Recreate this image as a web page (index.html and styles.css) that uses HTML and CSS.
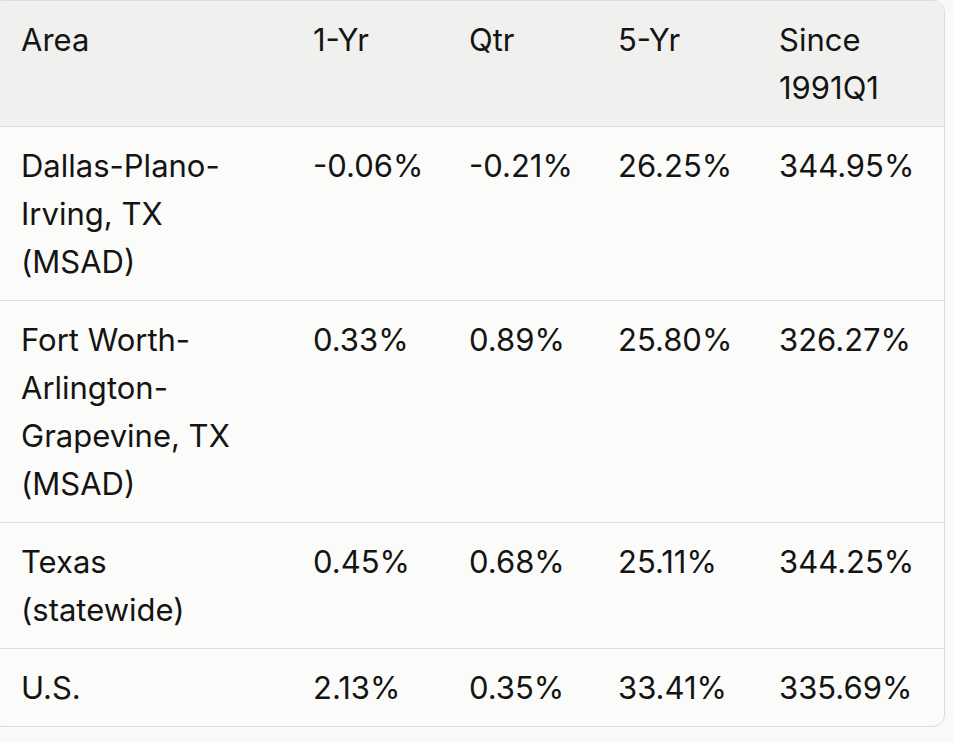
FILE: index.html
```html
<!DOCTYPE html>
<html lang="en">
<head>
<meta charset="utf-8">
<title>Area HPI</title>
<link rel="stylesheet" href="styles.css">
</head>
<body>
<div class="wrap">
  <table class="hpi">
    <colgroup>
      <col class="c-area">
      <col class="c-yr">
      <col class="c-qtr">
      <col class="c-5yr">
      <col class="c-since">
    </colgroup>
    <thead>
      <tr>
        <th>Area</th>
        <th>1-Yr</th>
        <th>Qtr</th>
        <th>5-Yr</th>
        <th>Since 1991Q1</th>
      </tr>
    </thead>
    <tbody>
      <tr>
        <td>Dallas-Plano-Irving, TX (MSAD)</td>
        <td class="num">-0.06%</td>
        <td class="num">-0.21%</td>
        <td class="num">26.25%</td>
        <td class="num">344.95%</td>
      </tr>
      <tr>
        <td>Fort Worth-Arlington-Grapevine, TX (MSAD)</td>
        <td class="num">0.33%</td>
        <td class="num">0.89%</td>
        <td class="num">25.80%</td>
        <td class="num">326.27%</td>
      </tr>
      <tr>
        <td>Texas (statewide)</td>
        <td class="num">0.45%</td>
        <td class="num">0.68%</td>
        <td class="num">25.11%</td>
        <td class="num">344.25%</td>
      </tr>
      <tr>
        <td>U.S.</td>
        <td class="num">2.13%</td>
        <td class="num">0.35%</td>
        <td class="num">33.41%</td>
        <td class="num">335.69%</td>
      </tr>
    </tbody>
  </table>
</div>
</body>
</html>
```

FILE: styles.css
```css
html, body {
  margin: 0;
  padding: 0;
  background: #faf9f7;
}

body {
  font-family: "Inter", "Liberation Sans", sans-serif;
  color: #141413;
}

.wrap {
  margin-left: -10px;
  width: 955px;
}

.hpi {
  width: 955px;
  table-layout: fixed;
  border-collapse: separate;
  border-spacing: 0;
  border: 1px solid #dedddb;
  border-radius: 12px;
  overflow: hidden;
  background: #fbfbf9;
  font-size: 31px;
  line-height: 48px;
}

.c-area { width: 292px; }
.c-yr { width: 156px; }
.c-qtr { width: 149px; }
.c-5yr { width: 161px; }
.c-since { width: 195px; }

.hpi th,
.hpi td {
  text-align: left;
  vertical-align: top;
  font-weight: 400;
  padding: 15px 16px 14px 30px;
}

.hpi thead th {
  background: #f0f0ee;
}

.hpi tbody td {
  border-top: 1px solid #dedddb;
}

.hpi td.num {
  white-space: nowrap;
}
```
